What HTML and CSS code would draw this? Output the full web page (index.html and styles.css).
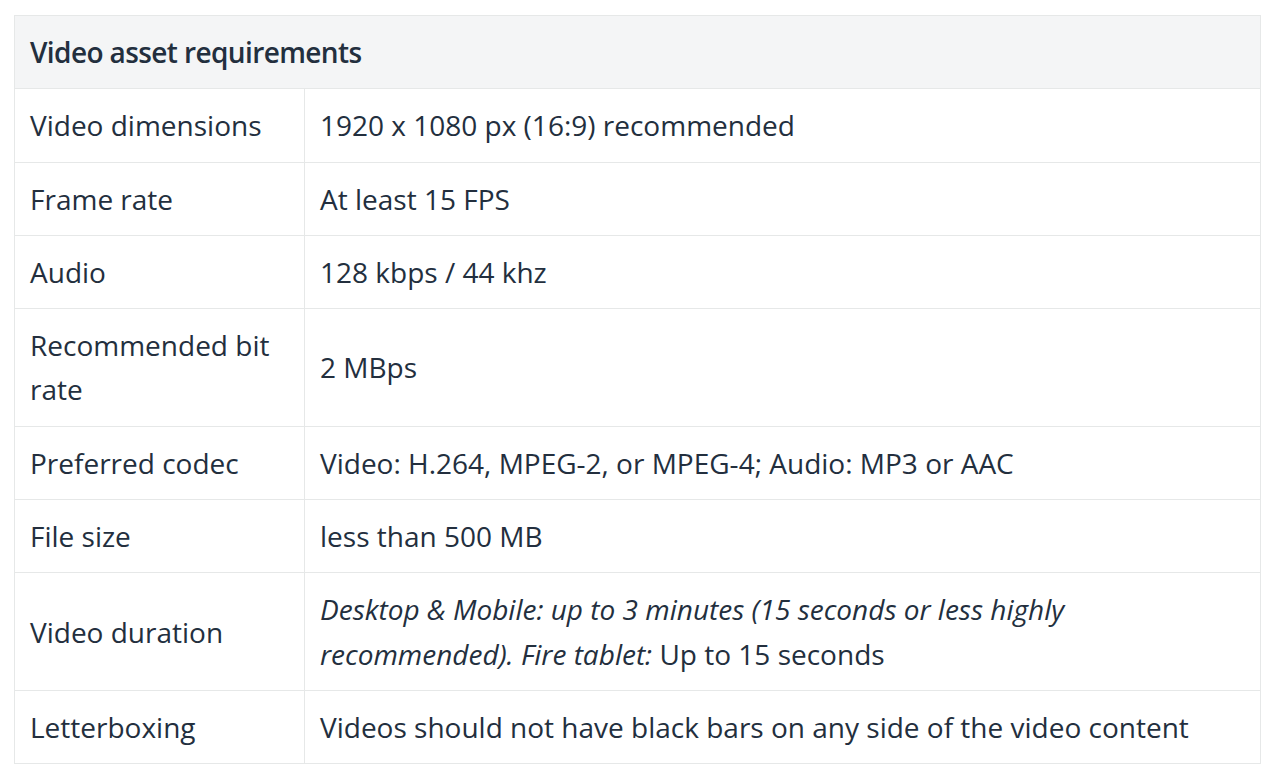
FILE: index.html
```html
<!DOCTYPE html>
<html lang="en">
<head>
<meta charset="utf-8">
<title>Video asset requirements</title>
<link rel="stylesheet" href="styles.css">
</head>
<body>
<div class="page">
  <table class="req">
    <thead>
      <tr><th colspan="2">Video asset requirements</th></tr>
    </thead>
    <tbody>
      <tr><td class="k">Video dimensions</td><td>1920 x 1080 px (16:9) recommended</td></tr>
      <tr><td class="k">Frame rate</td><td>At least 15 FPS</td></tr>
      <tr><td class="k">Audio</td><td>128 kbps / 44 khz</td></tr>
      <tr><td class="k">Recommended bit rate</td><td>2 MBps</td></tr>
      <tr><td class="k">Preferred codec</td><td>Video: H.264, MPEG-2, or MPEG-4; Audio: MP3 or AAC</td></tr>
      <tr><td class="k">File size</td><td>less than 500 MB</td></tr>
      <tr><td class="k">Video duration</td><td><em>Desktop &amp; Mobile: up to 3 minutes (15 seconds or less highly recommended). Fire tablet:</em> Up to 15 seconds</td></tr>
      <tr><td class="k">Letterboxing</td><td>Videos should not have black bars on any side of the video content</td></tr>
    </tbody>
  </table>
</div>
</body>
</html>
```
FILE: styles.css
```css
html, body {
  margin: 0;
  padding: 0;
  background: #ffffff;
}
.page {
  padding: 15px 19px 0 14px;
  font-family: "Open Sans", "Noto Sans", sans-serif;
  color: #232f3e;
}
.req {
  width: 100%;
  border-collapse: collapse;
  border: 1px solid #e6e8e8;
  font-size: 28px;
  line-height: 44.3px;
}
.req th {
  text-align: left;
  background: #f4f5f6;
  font-weight: 600;
  letter-spacing: -0.6px;
  padding: 14px 15px 14px 15px;
  border-bottom: 1px solid #e6e8e8;
}
.req td {
  padding: 14px 15px 14px 15px;
  border-top: 1px solid #e6e8e8;
  vertical-align: middle;
}
.req td.k {
  width: 259px;
  border-right: 1px solid #e6e8e8;
}
.req em {
  font-style: italic;
}
```
